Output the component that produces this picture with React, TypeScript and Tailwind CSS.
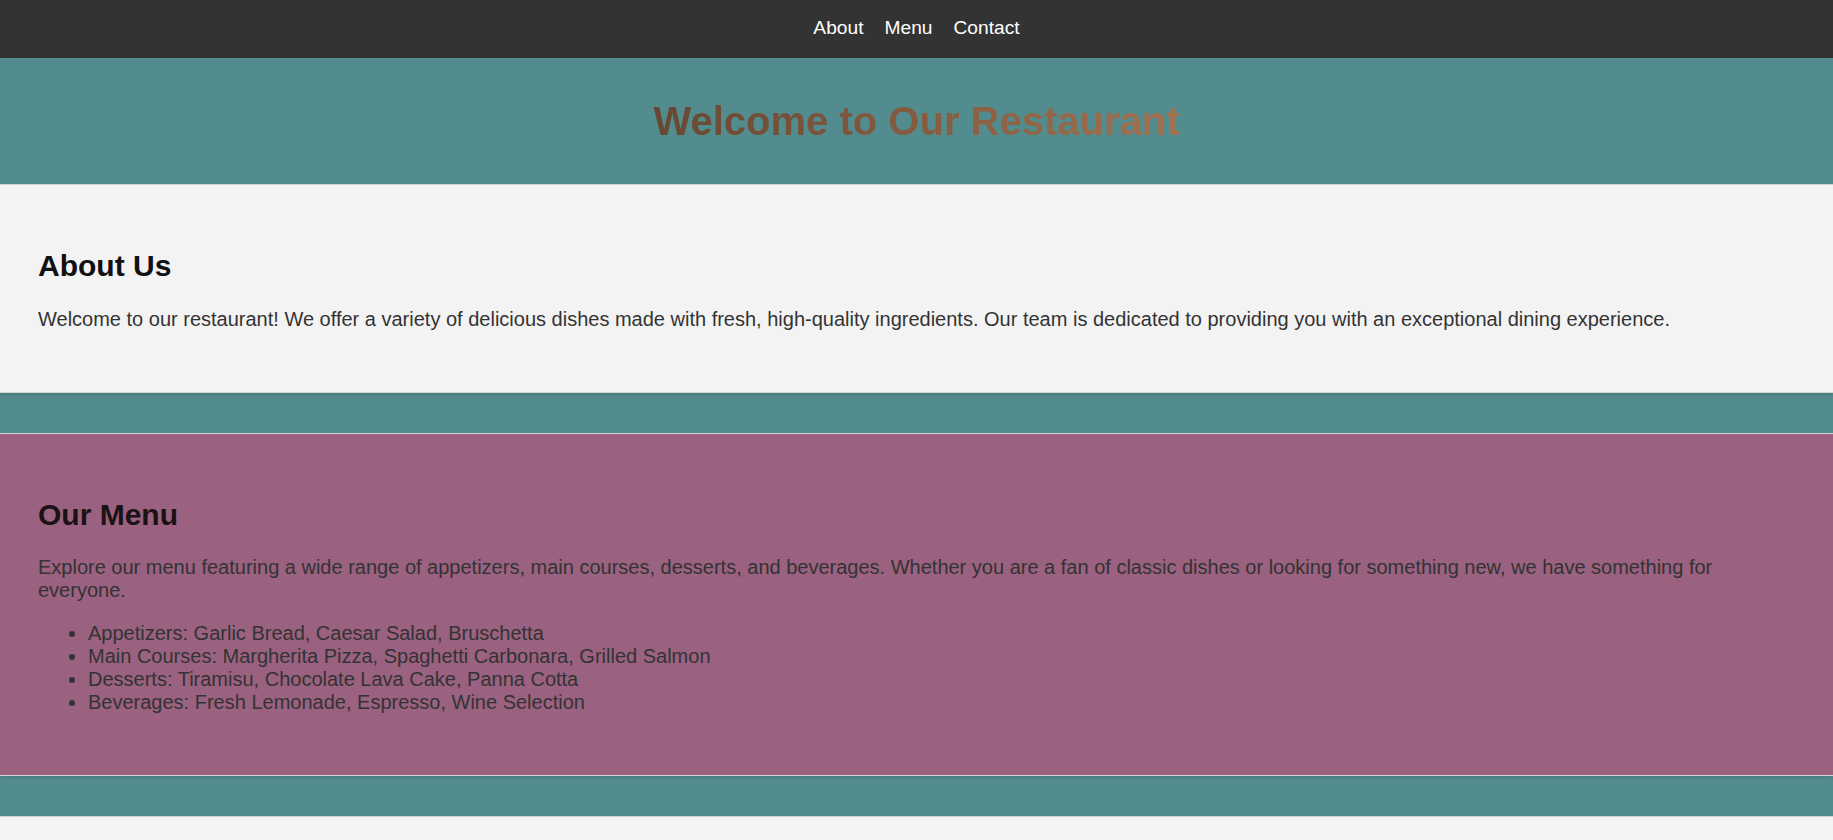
import React from 'react';

const MENU_ITEMS = [
  'Appetizers: Garlic Bread, Caesar Salad, Bruschetta',
  'Main Courses: Margherita Pizza, Spaghetti Carbonara, Grilled Salmon',
  'Desserts: Tiramisu, Chocolate Lava Cake, Panna Cotta',
  'Beverages: Fresh Lemonade, Espresso, Wine Selection',
];

const App: React.FC = () => {
  return (
    <div className="min-h-screen bg-[#538c8f] font-['Liberation_Sans',Arial,sans-serif]">
      <nav className="h-[58px] bg-[#333333] flex items-center justify-center gap-[21px] pb-[2px]">
        <a href="#about" className="text-white text-[19.2px] leading-[22px]">About</a>
        <a href="#menu" className="text-white text-[19.2px] leading-[22px]">Menu</a>
        <a href="#contact" className="text-white text-[19.2px] leading-[22px]">Contact</a>
      </nav>

      <header className="h-[126px] flex items-center justify-center">
        <h1 className="text-[40px] leading-[46px] font-bold bg-gradient-to-r from-[#684732] to-[#a3714f] bg-clip-text text-transparent">
          Welcome to Our Restaurant
        </h1>
      </header>

      <section id="about" className="bg-[#f3f3f3] border-y border-[#d4d4d4] shadow-[0_2px_4px_rgba(0,0,0,0.12)] px-[38px] pt-[40px] pb-[41px] mb-[40px]">
        <h2 className="text-[30px] leading-[34.5px] font-bold text-[#111111] mt-[24px] mb-[24px]">About Us</h2>
        <p className="text-[20px] leading-[23px] text-[#333333] mb-[20px]">
          Welcome to our restaurant! We offer a variety of delicious dishes made with fresh, high-quality ingredients. Our team is dedicated to providing you with an exceptional dining experience.
        </p>
      </section>

      <section id="menu" className="bg-[#9a6180] border-y border-[#d4d4d4] shadow-[0_2px_4px_rgba(0,0,0,0.12)] px-[38px] pt-[40px] pb-[41px] mb-[40px]">
        <h2 className="text-[30px] leading-[34.5px] font-bold text-[#1a1214] mt-[24px] mb-[24px]">Our Menu</h2>
        <p className="text-[20px] leading-[23px] text-[#333333] mb-[20px]">
          Explore our menu featuring a wide range of appetizers, main courses, desserts, and beverages. Whether you are a fan of classic dishes or looking for something new, we have something for everyone.
        </p>
        <ul className="list-disc pl-[50px] mb-[20px] text-[20px] leading-[23px] text-[#333333]">
          {MENU_ITEMS.map((item) => (
            <li key={item}>{item}</li>
          ))}
        </ul>
      </section>

      <section id="contact" className="bg-[#f3f3f3] border-y border-[#d4d4d4] h-[80px]"></section>
    </div>
  );
};

export default App;
